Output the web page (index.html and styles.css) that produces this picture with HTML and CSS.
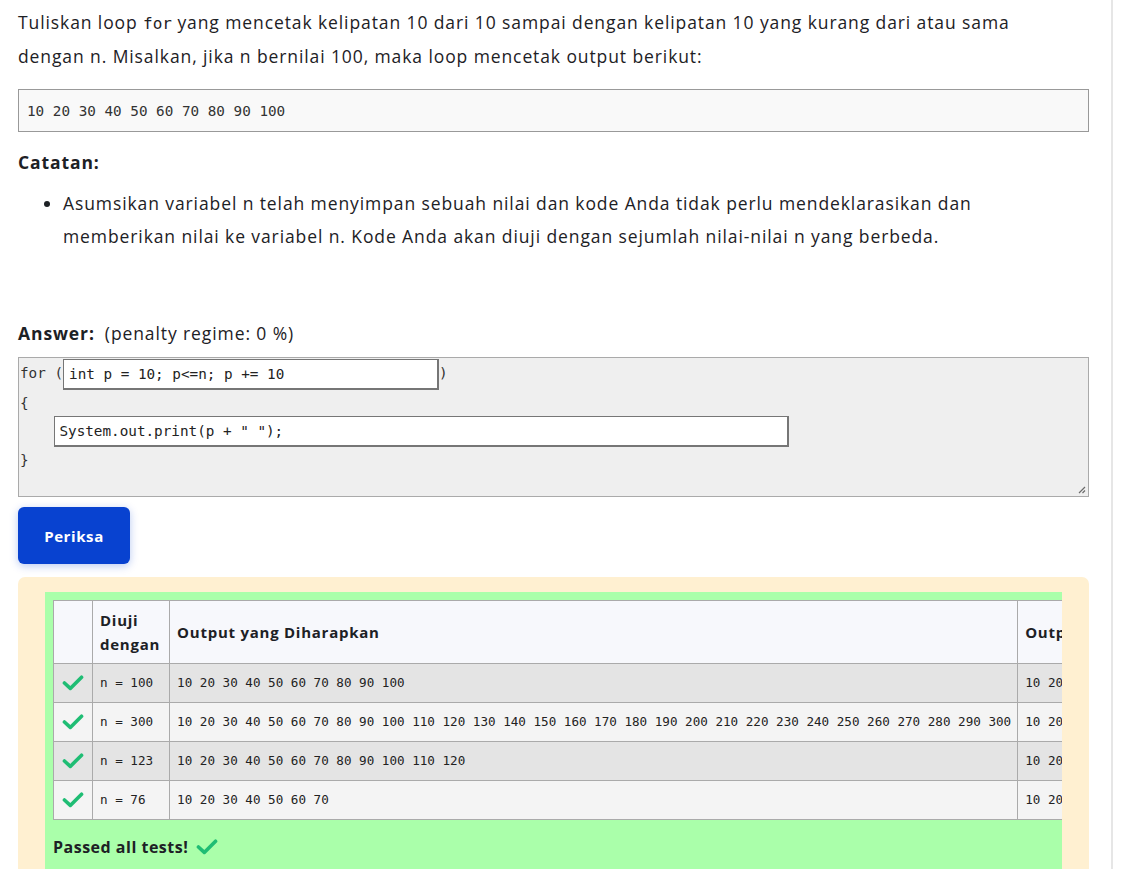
FILE: index.html
```html
<!DOCTYPE html>
<html lang="id">
<head>
<meta charset="utf-8">
<title>Quiz</title>
<link rel="stylesheet" href="styles.css">
</head>
<body>
<div class="page">
  <div class="content">
    <p class="question">Tuliskan loop <code class="kw">for</code> yang mencetak kelipatan 10 dari 10 sampai dengan kelipatan 10 yang kurang dari atau sama<br>dengan n. Misalkan, jika n bernilai 100, maka loop mencetak output berikut:</p>
    <pre class="sample">10 20 30 40 50 60 70 80 90 100</pre>
    <h4 class="note-title">Catatan:</h4>
    <ul class="notes">
      <li>Asumsikan variabel n telah menyimpan sebuah nilai dan kode Anda tidak perlu mendeklarasikan dan<br>memberikan nilai ke variabel n. Kode Anda akan diuji dengan sejumlah nilai-nilai n yang berbeda.</li>
    </ul>
    <div class="answer-label"><b>Answer:</b><span class="penalty">(penalty regime: 0 %)</span></div>
    <div class="code-box">
      <div class="code-line tall">for (<span class="inp inp-1">int p = 10; p&lt;=n; p += 10</span>)</div>
      <div class="code-line">{</div>
      <div class="code-line tall">    <span class="inp inp-2">System.out.print(p + " ");</span></div>
      <div class="code-line">}</div>
      <svg class="resize" width="8" height="8" viewBox="0 0 8 8"><path d="M7 1 L1 7 M7 4.5 L4.5 7" stroke="#6b6b6b" stroke-width="1.2" fill="none"/></svg>
    </div>
    <button class="check-btn">Periksa</button>
    <div class="feedback">
      <div class="result">
        <table class="tests">
          <thead>
            <tr>
              <th class="c-icon"></th>
              <th class="c-test">Diuji dengan</th>
              <th>Output yang Diharapkan</th>
              <th>Output yang Didapat</th>
              <th class="c-icon"></th>
            </tr>
          </thead>
          <tbody>
            <tr class="odd">
              <td class="c-icon"><svg class="tick" viewBox="0 0 24 20" width="22" height="18"><path d="M2.5 10 L9 16 L21.5 3.5" stroke="#1fbd74" stroke-width="4" fill="none" stroke-linecap="round" stroke-linejoin="round"/></svg></td>
              <td class="mono c-test">n = 100</td>
              <td class="mono">10 20 30 40 50 60 70 80 90 100</td>
              <td class="mono">10 20 30 40 50 60 70 80 90 100</td>
              <td class="c-icon"></td>
            </tr>
            <tr class="even">
              <td class="c-icon"><svg class="tick" viewBox="0 0 24 20" width="22" height="18"><path d="M2.5 10 L9 16 L21.5 3.5" stroke="#1fbd74" stroke-width="4" fill="none" stroke-linecap="round" stroke-linejoin="round"/></svg></td>
              <td class="mono c-test">n = 300</td>
              <td class="mono">10 20 30 40 50 60 70 80 90 100 110 120 130 140 150 160 170 180 190 200 210 220 230 240 250 260 270 280 290 300</td>
              <td class="mono">10 20 30 40 50 60 70 80 90 100 110 120 130 140 150 160 170 180 190 200 210 220 230 240 250 260 270 280 290 300</td>
              <td class="c-icon"></td>
            </tr>
            <tr class="odd">
              <td class="c-icon"><svg class="tick" viewBox="0 0 24 20" width="22" height="18"><path d="M2.5 10 L9 16 L21.5 3.5" stroke="#1fbd74" stroke-width="4" fill="none" stroke-linecap="round" stroke-linejoin="round"/></svg></td>
              <td class="mono c-test">n = 123</td>
              <td class="mono">10 20 30 40 50 60 70 80 90 100 110 120</td>
              <td class="mono">10 20 30 40 50 60 70 80 90 100 110 120</td>
              <td class="c-icon"></td>
            </tr>
            <tr class="even">
              <td class="c-icon"><svg class="tick" viewBox="0 0 24 20" width="22" height="18"><path d="M2.5 10 L9 16 L21.5 3.5" stroke="#1fbd74" stroke-width="4" fill="none" stroke-linecap="round" stroke-linejoin="round"/></svg></td>
              <td class="mono c-test">n = 76</td>
              <td class="mono">10 20 30 40 50 60 70</td>
              <td class="mono">10 20 30 40 50 60 70</td>
              <td class="c-icon"></td>
            </tr>
          </tbody>
        </table>
        <div class="passed">Passed all tests! <svg class="tick" viewBox="0 0 24 20" width="22" height="18"><path d="M2.5 10 L9 16 L21.5 3.5" stroke="#1fbd74" stroke-width="4" fill="none" stroke-linecap="round" stroke-linejoin="round"/></svg></div>
      </div>
    </div>
  </div>
</div>
</body>
</html>
```
FILE: styles.css
```css
html, body {
  margin: 0;
  padding: 0;
  background: #fff;
}
body {
  font-family: "Open Sans", "Noto Sans", sans-serif;
  color: #1d2125;
  font-size: 17.5px;
  letter-spacing: 0.9px;
  overflow: hidden;
}
.page {
  width: 1113px;
  min-height: 869px;
  border-right: 2px solid #e6e6e6;
  box-sizing: border-box;
}
.content {
  padding: 6px 22px 0 18px;
}
.question {
  margin: 0;
  line-height: 33px;
}
.kw {
  font-family: "DejaVu Sans Mono", monospace;
  font-size: 16px;
  letter-spacing: 0;
}
.sample {
  margin: 16px 0 0;
  background: #f9f9f9;
  border: 1px solid #999;
  padding: 11px 8px 10px;
  font-family: "DejaVu Sans Mono", monospace;
  font-size: 14.3px;
  letter-spacing: 0;
  line-height: 20px;
  color: #333;
}
.note-title {
  margin: 14px 0 0;
  font-size: 17.5px;
  font-weight: 700;
  line-height: 33px;
}
.notes {
  margin: 8px 0 0;
  padding-left: 45px;
  line-height: 33px;
}
.answer-label {
  margin-top: 64px;
  line-height: 33px;
}
.answer-label b {
  font-weight: 700;
}
.penalty {
  margin-left: 10px;
}
.code-box {
  position: relative;
  margin-top: 7px;
  height: 140px;
  box-sizing: border-box;
  background: #efefef;
  border: 1px solid #aaa;
  padding: 1px 0 0 1px;
  font-family: "DejaVu Sans Mono", monospace;
  font-size: 14.3px;
  letter-spacing: 0;
  color: #333;
}
.code-line {
  height: 26px;
  line-height: 26px;
  white-space: pre;
}
.code-line.tall {
  height: 31px;
  line-height: 29px;
}
.inp {
  display: inline-block;
  vertical-align: top;
  height: 31px;
  line-height: 28px;
  box-sizing: border-box;
  background: #fff;
  border: 1px solid #767676;
  border-right-width: 2px;
  border-bottom-width: 2px;
  padding: 0 5px;
  color: #222;
}
.inp-1 {
  width: 376px;
}
.inp-2 {
  width: 735px;
  padding-left: 4px;
}
.resize {
  position: absolute;
  right: 2px;
  bottom: 2px;
}
.check-btn {
  display: block;
  margin-top: 10px;
  width: 112px;
  height: 57px;
  border: 0;
  border-radius: 6px;
  background: #0842d0;
  color: #fff;
  font-family: "Open Sans", sans-serif;
  font-weight: 700;
  font-size: 15px;
  letter-spacing: 0.6px;
  box-shadow: 0 2px 8px rgba(8, 66, 208, 0.28);
}
.feedback {
  margin-top: 13px;
  background: #fff0d1;
  border-radius: 7px 7px 0 0;
  padding: 15px 27px 0;
}
.result {
  background: #aaffaa;
  padding: 8px 0 30px 8px;
  overflow: hidden;
}
.tests {
  border-collapse: collapse;
  font-size: 15px;
  letter-spacing: 0.75px;
}
.tests th, .tests td {
  border: 1px solid #aaa;
  padding: 7px 6px 7px 7px;
  text-align: left;
  vertical-align: middle;
}
.tests th {
  background: #f7f8fc;
  font-weight: 700;
  line-height: 24px;
  white-space: nowrap;
}
.tests th.c-test {
  white-space: normal;
}
.tests .c-test {
  padding-right: 9px;
}
.tests td {
  line-height: 24px;
}
.tests tr.odd td {
  background: #e4e4e4;
}
.tests tr.even td {
  background: #f4f4f4;
}
.mono {
  font-family: "DejaVu Sans Mono", monospace;
  font-size: 12.6px;
  letter-spacing: 0;
  white-space: pre;
  color: #222;
}
.tests .c-icon {
  padding: 7px 8px 7px 8px;
}
.tests th.c-icon {
  min-width: 22px;
}
.tick {
  display: block;
}
.passed {
  margin-top: 15px;
  font-weight: 700;
  font-size: 16px;
  letter-spacing: 0.5px;
  line-height: 24px;
  display: flex;
  align-items: center;
  gap: 8px;
}
```
